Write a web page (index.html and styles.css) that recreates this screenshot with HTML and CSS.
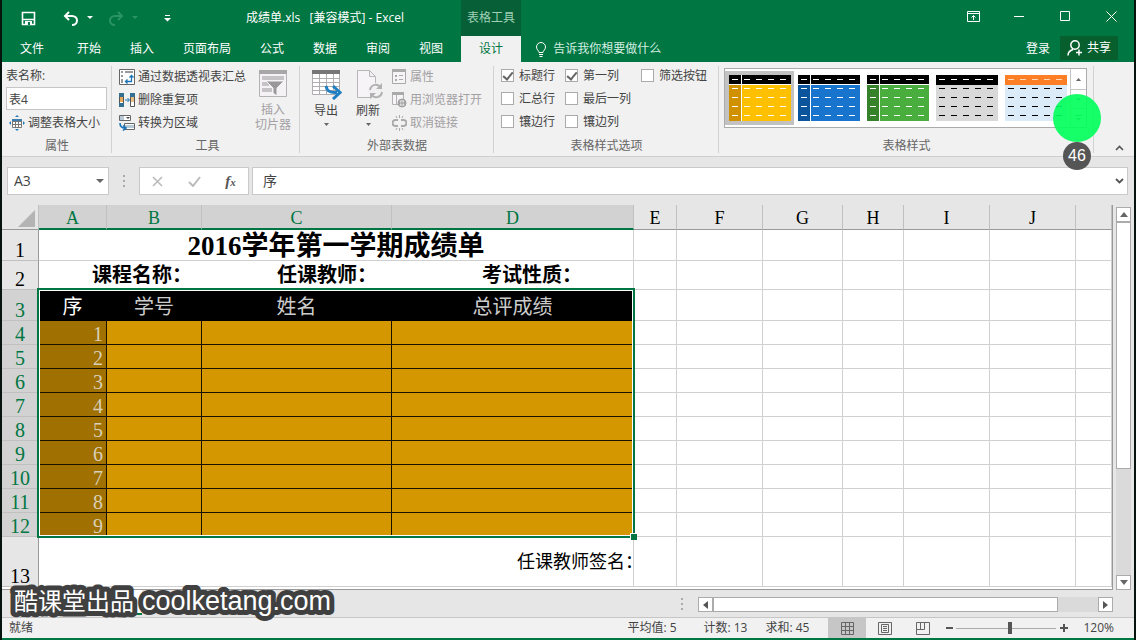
FILE: index.html
```html
<!DOCTYPE html>
<html lang="zh-CN">
  <head>
    <meta charset="utf-8">
    <title>成绩单.xls [兼容模式] - Excel</title>
    <link rel="stylesheet" href="styles.css">
  </head>
  <body>
    <svg class="defs" width="0" height="0">
      <defs>
        <path id="dashes" d="M3 4.500h6m6 0h6m6 0h6m6 0h6m6 0h6M3 13.500h6m6 0h6m6 0h6m6 0h6m6 0h6M3 22.500h6m6 0h6m6 0h6m6 0h6m6 0h6M3 31.500h6m6 0h6m6 0h6m6 0h6m6 0h6M3 40.500h6m6 0h6m6 0h6m6 0h6m6 0h6"/>
      </defs>
    </svg>

    <header class="titlebar">
      <div class="title-left">
        <div class="quick">
          <button aria-label="保存"><svg width="15" height="15" viewBox="0 0 15 15"><path d="M1.500 1.500h12v12h-12zM1 8.500h13" fill="none" stroke="#fff" stroke-width="1.600"/><path d="M4 10h7v4H4z" fill="#fff"/><path d="M7 11h2v3H7z" fill="#007642"/></svg></button>
          <button aria-label="撤消"><svg width="16" height="15" viewBox="0 0 16 15"><path d="M6 1L2 5l4 4M2 5h7c3 0 5 2 5 4.500S12 14 9 14" fill="none" stroke="#fff" stroke-width="2"/></svg></button>
          <svg class="drop" width="6" height="4" viewBox="0 0 6 4"><path d="M0 0h6L3 3z" fill="#fff"/></svg>
          <button aria-label="恢复" disabled><svg width="16" height="15" viewBox="0 0 16 15"><path d="M10 1l4 4-4 4M14 5H7C4 5 2 7 2 9.500S4 14 7 14" fill="none" stroke="#2b9466" stroke-width="2"/></svg></button>
          <svg class="drop" width="6" height="4" viewBox="0 0 6 4"><path d="M0 0h6L3 3z" fill="#2b9466"/></svg>
          <button class="quick-more" aria-label="自定义快速访问工具栏"><svg width="7" height="7" viewBox="0 0 7 7"><path d="M1 0h5v1H1zM0 3h7L3.500 6.500z" fill="#fff"/></svg></button>
        </div>
        <h1 class="doc-title">成绩单.xls&nbsp;&nbsp; [兼容模式] - Excel</h1>
      </div>
      <div class="context-title">表格工具</div>
      <div class="window-controls">
        <button aria-label="功能区显示选项"><svg width="13" height="11" viewBox="0 0 13 11"><path d="M.5.5h12v10H.5zM.5 2.500h12M6.500 9V4.500M4.500 6.500l2-2 2 2" fill="none" stroke="#fff"/></svg></button>
        <button aria-label="最小化"><svg width="10" height="11" viewBox="0 0 10 11"><path d="M0 5.500h10" stroke="#fff"/></svg></button>
        <button aria-label="最大化"><svg width="11" height="11" viewBox="0 0 11 11"><path d="M.5.5h9v9h-9z" fill="none" stroke="#fff"/></svg></button>
        <button aria-label="关闭"><svg width="11" height="11" viewBox="0 0 11 11"><path d="M.5.5l10 10M10.500.5l-10 10" stroke="#fff"/></svg></button>
      </div>
    </header>

    <nav class="tabs">
      <button class="tab tab-file">文件</button>
      <button class="tab">开始</button>
      <button class="tab">插入</button>
      <button class="tab">页面布局</button>
      <button class="tab">公式</button>
      <button class="tab">数据</button>
      <button class="tab">审阅</button>
      <button class="tab">视图</button>
      <button class="tab tab-active">设计</button>
      <button class="tell-me"><svg width="12" height="15" viewBox="0 0 12 15"><path d="M4 10.500C4 8.500 1.500 8 1.500 5a4.500 4.500 0 0 1 9 0c0 3-2.500 3.500-2.500 5.500zM4 12.500h4M4.500 14.500h3" fill="none" stroke="#fff"/></svg>告诉我你想要做什么</button>
      <div class="account">
        <button class="login">登录</button>
        <button class="share"><svg width="16" height="16" viewBox="0 0 16 16"><circle cx="8" cy="5" r="4.200" fill="none" stroke="#fff" stroke-width="1.500"/><path d="M1 15.500c0-3 2-5 5-6M9 12.500h6M12 9.500v6" fill="none" stroke="#fff" stroke-width="1.500"/></svg>共享</button>
      </div>
    </nav>

    <section class="ribbon">
      <div class="group group-props">
        <div class="rows">
          <label for="table-name">表名称:</label>
          <input id="table-name" class="table-name" value="表4">
          <button class="cmd"><svg width="16" height="16" viewBox="0 0 16 16"><path d="M3.500 4.500h9v8h-9zM3.500 6.500h9M3.500 9.500h9M6.500 4.500v8M9.500 4.500v8" fill="#fff" stroke="#777"/><path d="M3 4h10v2H3z" fill="#3c7fb0"/><path d="M6 2l2-2 2 2zM6 14l2 2 2-2zM2 6L0 8l2 2zM14 6l2 2-2 2z" fill="#2b7db8"/></svg>调整表格大小</button>
        </div>
        <h2>属性</h2>
      </div>

      <div class="group group-tools">
        <div class="cols">
          <div class="rows">
            <button class="cmd"><svg width="16" height="16" viewBox="0 0 16 16"><path d="M.5.5h15v15H.5z" fill="#fff" stroke="#666"/><path d="M2 2h2v2H2zM6 2h8v2H6zM2 6h2v2H2zM2 10h2v4H2z" fill="#9a9a9a"/><path d="M7 12.500h5.500V7M10.500 8.500l2-2 2 2M8.500 10.500l-2 2 2 2" fill="none" stroke="#1b75b8" stroke-width="1.300"/></svg>通过数据透视表汇总</button>
            <button class="cmd"><svg width="16" height="16" viewBox="0 0 16 16"><path d="M.5 1.500h4v13h-4zM11.500 1.500h4v13h-4z" fill="#fff" stroke="#555"/><path d="M0 1h5v4H0zM0 11h5v4H0zM11 1h5v4h-5z" fill="#336f93"/><path d="M1 5h3v5H1z" fill="#e6a95b"/><path d="M12 5h3v5h-3z" fill="#e8bd85"/><path d="M6 8h4M8.500 6l2 2-2 2" fill="none" stroke="#1b75b8"/></svg>删除重复项</button>
            <button class="cmd"><svg width="16" height="16" viewBox="0 0 16 16"><path d="M.5.5h11v5H.5zM5.500 8.500h10v6h-10z" fill="#fff" stroke="#666"/><path d="M1 1h4v4H1zM6 10h9v3H6z" fill="#b7c9d5"/><path d="M7 2h4L9 4z" fill="#444"/><path d="M1 8c0 4 2 5 5 5M4 10.500l3 2.500-3 2.500" fill="none" stroke="#1b75b8" stroke-width="1.600"/></svg>转换为区域</button>
          </div>
          <button class="big" disabled><svg width="30" height="30" viewBox="0 0 30 30"><path d="M1.500 1.500h27v26h-27z" fill="#f4f2f4" stroke="#b5b2b5"/><path d="M1 1h28v4H1z" fill="#a9a6a9"/><path d="M4 7h22v4H4zM4 13h7v4H4zM4 19h10v4H4z" fill="#c6c3c6"/><path d="M8 12h18l-7 7v8l-4-3v-5z" fill="#9a979a" stroke="#f4f2f4"/></svg><span>插入<br>切片器</span></button>
        </div>
        <h2>工具</h2>
      </div>

      <div class="group group-external">
        <div class="cols">
          <button class="big"><svg width="31" height="31" viewBox="0 0 31 31"><path d="M1.500 1.500h27v24h-27zM1.500 9.500h27M1.500 13.500h27M1.500 17.500h27M1.500 21.500h27M8.500 5v20M15.500 5v20M22.500 5v20" fill="#fff" stroke="#b0adb0"/><path d="M1 1h28v4H1z" fill="#767676"/><path d="M15 17c1 6 5 7 11 6.500M22 17l7 6.500-7 6.500" fill="none" stroke="#1f7fc1" stroke-width="3"/></svg><span>导出</span><svg class="caret" width="5" height="3" viewBox="0 0 5 3"><path d="M0 0h5L2.500 3z" fill="#666"/></svg></button>
          <button class="big"><svg width="31" height="31" viewBox="0 0 31 31"><path d="M4.500 1.500h12l6 6v21h-18zM16.500 1.500v6h6" fill="#f6f4f6" stroke="#b9b6b9"/><circle cx="23" cy="22" r="8" fill="#f1f1f1"/><path d="M17 21c1-6 8-7 11-2M29 23c-1 6-8 7-11 2" fill="none" stroke="#b3b0b3" stroke-width="2"/><path d="M29 14v6h-6zM17 30v-6h6z" fill="#b3b0b3"/></svg><span>刷新</span><svg class="caret" width="5" height="3" viewBox="0 0 5 3"><path d="M0 0h5L2.500 3z" fill="#666"/></svg></button>
          <div class="rows">
            <button class="cmd" disabled><svg width="15" height="16" viewBox="0 0 15 16"><path d="M.5.5h13v14H.5z" fill="#f6f4f6" stroke="#aaa"/><path d="M0 0h14v3H0zM3 6h2v2H3zM3 10h2v2H3z" fill="#aaa"/><path d="M7 6.500h4M7 10.500h4" stroke="#aaa"/></svg>属性</button>
            <button class="cmd" disabled><svg width="15" height="16" viewBox="0 0 15 16"><path d="M.5 1.500h11v11H.5zM4.500 3v9" fill="#f6f4f6" stroke="#b5b2b5"/><path d="M0 0h12v3H0z" fill="#aaa"/><circle cx="10" cy="11" r="4" fill="#f6f4f6" stroke="#999"/><path d="M6 11h8M10 7v8M8 8q-1 3 0 6M12 8q1 3 0 6" fill="none" stroke="#999"/></svg>用浏览器打开</button>
            <button class="cmd" disabled><svg width="15" height="16" viewBox="0 0 15 16"><path d="M6 5H3.500a3 3 0 0 0 0 6H6M9 5h2.500a3 3 0 0 1 0 6H9" fill="none" stroke="#aaa" stroke-width="2"/><path d="M7.500 0v3M4 1l1 2M11 1l-1 2M7.500 13v3M4 15l1-2M11 15l-1-2" stroke="#aaa"/></svg>取消链接</button>
          </div>
        </div>
        <h2>外部表数据</h2>
      </div>

      <div class="group group-options">
        <div class="checks">
          <label><input type="checkbox" checked>标题行</label>
          <label><input type="checkbox" checked>第一列</label>
          <label><input type="checkbox">筛选按钮</label>
          <label><input type="checkbox">汇总行</label>
          <label><input type="checkbox">最后一列</label>
          <span></span>
          <label><input type="checkbox">镶边行</label>
          <label><input type="checkbox">镶边列</label>
        </div>
        <h2>表格样式选项</h2>
      </div>

      <div class="group group-styles">
        <div class="gallery">
          <button class="swatch swatch-on" aria-label="金色"><svg width="62" height="46"><path d="M0 0h62v9H0z"/><path d="M0 10h62v36H0z" fill="#ffc000"/><path d="M0 10h12v36H0z" fill="#cf9100"/><path d="M12.500 0v46M0 9.500h62" stroke="#fff"/><use href="#dashes" stroke="#fff"/></svg></button>
          <button class="swatch" aria-label="蓝色"><svg width="62" height="46"><path d="M0 0h62v9H0z"/><path d="M0 10h62v36H0z" fill="#1874cd"/><path d="M0 10h12v36H0z" fill="#0a559b"/><path d="M12.500 0v46M0 9.500h62" stroke="#fff"/><use href="#dashes" stroke="#fff"/></svg></button>
          <button class="swatch" aria-label="绿色"><svg width="62" height="46"><path d="M0 0h62v9H0z"/><path d="M0 10h62v36H0z" fill="#4aae3f"/><path d="M0 10h12v36H0z" fill="#35822b"/><path d="M12.500 0v46M0 9.500h62" stroke="#fff"/><use href="#dashes" stroke="#fff"/></svg></button>
          <button class="swatch" aria-label="灰色"><svg width="62" height="46"><path d="M0 0h62v10H0z"/><path d="M0 10h62v36H0z" fill="#d9d9d9"/><use href="#dashes" stroke="#000"/><path d="M3 4.500h6m6 0h6m6 0h6m6 0h6m6 0h6" stroke="#fff"/></svg></button>
          <button class="swatch" aria-label="橙色"><svg width="62" height="46"><path d="M0 0h62v10H0z" fill="#ff7f27"/><path d="M0 10h62v36H0z" fill="#dcebf8"/><use href="#dashes" stroke="#000"/><path d="M3 4.500h6m6 0h6m6 0h6m6 0h6m6 0h6" stroke="#ff7f27"/><path d="M3 4.500h6m6 0h6m6 0h6m6 0h6m6 0h6" stroke="#ffd9b8"/></svg></button>
          <div class="gallery-scroll">
            <button aria-label="上一行"><svg width="5" height="3"><path d="M0 3h5L2.500 0z" fill="#666"/></svg></button>
            <button aria-label="下一行"><svg width="5" height="3"><path d="M0 0h5L2.500 3z" fill="#666"/></svg></button>
            <button aria-label="其他"><svg width="7" height="6"><path d="M0 0h7v1H0zM1 3h5L3.500 6z" fill="#666"/></svg></button>
          </div>
          <div class="click-spot"></div>
          <div class="click-count">46</div>
        </div>
        <h2>表格样式</h2>
      </div>
      <button class="collapse" aria-label="折叠功能区"><svg width="9" height="6" viewBox="0 0 9 6"><path d="M1 5l3.500-3.500L8 5" fill="none" stroke="#555" stroke-width="1.600"/></svg></button>
    </section>

    <section class="formula-bar">
      <div class="name-box">
        <input value="A3" aria-label="名称框">
        <svg width="8" height="4" viewBox="0 0 8 4"><path d="M0 0h8L4 4z" fill="#666"/></svg>
      </div>
      <svg class="grip" width="2" height="12" viewBox="0 0 2 12"><path d="M0 0h2v2H0zM0 5h2v2H0zM0 10h2v2H0z" fill="#aaa"/></svg>
      <div class="formula-buttons">
        <button aria-label="取消"><svg width="11" height="11" viewBox="0 0 11 11"><path d="M1 1l9 9M10 1l-9 9" stroke="#bbb" stroke-width="1.600"/></svg></button>
        <button aria-label="输入"><svg width="13" height="11" viewBox="0 0 13 11"><path d="M1 6l4 4 7-9" fill="none" stroke="#bbb" stroke-width="2"/></svg></button>
        <button class="fx" aria-label="插入函数">f<sub>x</sub></button>
      </div>
      <div class="formula-input">
        <input value="序" aria-label="编辑栏">
        <svg width="9" height="6" viewBox="0 0 9 6"><path d="M1 1l3.500 3.500L8 1" fill="none" stroke="#555" stroke-width="1.800"/></svg>
      </div>
    </section>

    <main class="sheet">
      <div class="grid">
        <table>
          <colgroup>
            <col class="w-head"><col class="w-a"><col class="w-b"><col class="w-c"><col class="w-d"><col class="w-e"><col class="w-f"><col class="w-g"><col class="w-h"><col class="w-i"><col class="w-j"><col>
          </colgroup>
          <thead>
            <tr><th class="corner"><svg width="17" height="17" viewBox="0 0 17 17"><path d="M17 0v17H0z" fill="#b4b4b4"/></svg></th><th class="on">A</th><th class="on">B</th><th class="on">C</th><th class="on">D</th><th>E</th><th>F</th><th>G</th><th>H</th><th>I</th><th>J</th><th></th></tr>
          </thead>
          <tbody>
            <tr class="r-title"><th>1</th><td colspan="4" class="sheet-title">2016学年第一学期成绩单</td><td></td><td></td><td></td><td></td><td></td><td></td><td></td></tr>
            <tr class="r-info"><th>2</th><td colspan="4"><div class="info"><span>课程名称：</span><span>任课教师：</span><span>考试性质：</span></div></td><td></td><td></td><td></td><td></td><td></td><td></td><td></td></tr>
            <tr class="r-head"><th class="on">3</th><td class="first">序</td><td>学号</td><td>姓名</td><td>总评成绩</td><td></td><td></td><td></td><td></td><td></td><td></td><td></td></tr>
            <tr class="r-data"><th class="on">4</th><td>1</td><td></td><td></td><td></td><td></td><td></td><td></td><td></td><td></td><td></td><td></td></tr>
            <tr class="r-data"><th class="on">5</th><td>2</td><td></td><td></td><td></td><td></td><td></td><td></td><td></td><td></td><td></td><td></td></tr>
            <tr class="r-data"><th class="on">6</th><td>3</td><td></td><td></td><td></td><td></td><td></td><td></td><td></td><td></td><td></td><td></td></tr>
            <tr class="r-data"><th class="on">7</th><td>4</td><td></td><td></td><td></td><td></td><td></td><td></td><td></td><td></td><td></td><td></td></tr>
            <tr class="r-data"><th class="on">8</th><td>5</td><td></td><td></td><td></td><td></td><td></td><td></td><td></td><td></td><td></td><td></td></tr>
            <tr class="r-data"><th class="on">9</th><td>6</td><td></td><td></td><td></td><td></td><td></td><td></td><td></td><td></td><td></td><td></td></tr>
            <tr class="r-data"><th class="on">10</th><td>7</td><td></td><td></td><td></td><td></td><td></td><td></td><td></td><td></td><td></td><td></td></tr>
            <tr class="r-data"><th class="on">11</th><td>8</td><td></td><td></td><td></td><td></td><td></td><td></td><td></td><td></td><td></td><td></td></tr>
            <tr class="r-data"><th class="on">12</th><td>9</td><td></td><td></td><td></td><td></td><td></td><td></td><td></td><td></td><td></td><td></td></tr>
            <tr class="r-sign"><th>13</th><td colspan="4">任课教师签名：</td><td></td><td></td><td></td><td></td><td></td><td></td><td></td></tr>
          </tbody>
        </table>
        <div class="selection"></div>
      </div>
      <div class="vscroll">
        <button aria-label="向上滚动"><svg width="8" height="5"><path d="M0 5h8L4 0z" fill="#666"/></svg></button>
        <div class="vthumb"></div>
        <div class="vtrack"></div>
        <button aria-label="向下滚动"><svg width="8" height="5"><path d="M0 0h8L4 5z" fill="#666"/></svg></button>
      </div>
    </main>

    <footer>
      <div class="sheet-bar">
        <button class="sheet-tab sheet-tab-active">1#</button>
        <button class="sheet-tab">2#</button>
        <button class="add-sheet" aria-label="新工作表"><svg width="14" height="14" viewBox="0 0 14 14"><path d="M4 7h6M7 4v6" stroke="#666" stroke-width="1.500"/><circle cx="7" cy="7" r="6" fill="none" stroke="#666"/></svg></button>
        <svg class="grip" width="2" height="12" viewBox="0 0 2 12"><path d="M0 0h2v2H0zM0 5h2v2H0zM0 10h2v2H0z" fill="#aaa"/></svg>
        <div class="hscroll">
          <button aria-label="向左滚动"><svg width="5" height="8"><path d="M5 0v8L0 4z" fill="#555"/></svg></button>
          <div class="hthumb"></div>
          <div class="htrack"></div>
          <button aria-label="向右滚动"><svg width="5" height="8"><path d="M0 0v8L5 4z" fill="#555"/></svg></button>
        </div>
      </div>
      <div class="status">
        <span>就绪</span>
        <div class="stats"><span>平均值: 5</span><span>计数: 13</span><span>求和: 45</span></div>
        <div class="views">
          <button class="view-on" aria-label="普通"><svg width="13" height="13" viewBox="0 0 13 13"><path d="M.5.5h12v12H.5zM.5 4.500h12M.5 8.500h12M4.500.5v12M8.500.5v12" fill="none" stroke="#666"/></svg></button>
          <button aria-label="页面布局"><svg width="14" height="13" viewBox="0 0 14 13"><path d="M.5.5h13v12H.5zM3.500 2.500h7v8h-7zM5 4.500h4M5 6.500h4M5 8.500h4" fill="none" stroke="#666"/></svg></button>
          <button aria-label="分页预览"><svg width="14" height="13" viewBox="0 0 14 13"><path d="M.5.5h13v12H.5zM.5 7.500h8V.5M4.500.5v7" fill="none" stroke="#666"/></svg></button>
        </div>
        <div class="zoom">
          <button aria-label="缩小"><svg width="7" height="8"><path d="M0 3h7v2H0z" fill="#555"/></svg></button>
          <input type="range" min="0" max="100" value="54" aria-label="缩放">
          <button aria-label="放大"><svg width="8" height="8"><path d="M0 3h8v2H0zM3 0h2v8H3z" fill="#555"/></svg></button>
          <span>120%</span>
        </div>
      </div>
    </footer>

    <svg class="watermark" width="340" height="44">
      <text x="8" y="30">酷课堂出品</text>
      <text class="latin" x="136" y="30">coolketang.com</text>
    </svg>
  </body>
</html>
```

FILE: styles.css
```css
* {
  box-sizing: border-box;
}

body {
  background: #e6e6e6;
  border: solid #06140d;
  border-width: 0 2px;
  color: #444;
  display: flex;
  flex-direction: column;
  font: 12px/18px "Open Sans", "Noto Sans CJK SC", sans-serif;
  height: 100vh;
  margin: 0;
  overflow: hidden;
  position: relative;
}

button,
input {
  background: none;
  border: 0;
  color: inherit;
  font: inherit;
  margin: 0;
  padding: 0;
}

svg {
  display: block;
  flex: none;
}

.defs {
  position: absolute;
}

/* title bar */

.titlebar {
  background: #007642;
  color: #fff;
  display: flex;
  height: 36px;
}

.title-left {
  display: flex;
  justify-content: space-between;
  padding: 0 57px 0 19px;
  width: 459px;
}

.quick {
  align-items: center;
  display: flex;
}

.quick button + button {
  margin-left: 27px;
}

.quick .drop {
  margin: 0 15px 0 8px;
}

.quick .quick-more {
  margin-left: 11px;
}

.doc-title {
  font-size: 12px;
  font-weight: normal;
  line-height: 36px;
  margin: 0;
  white-space: nowrap;
}

.context-title {
  background: #065f36;
  color: #9fd0b5;
  line-height: 36px;
  text-align: center;
  width: 60px;
}

.window-controls {
  display: flex;
  margin-left: auto;
}

.window-controls button {
  align-items: center;
  display: flex;
  height: 33px;
  justify-content: center;
  width: 46px;
}

/* tabs */

.tabs {
  background: #007642;
  color: #fff;
  display: flex;
  gap: 1px;
  height: 26px;
}

.tab {
  padding: 0 14px;
  white-space: nowrap;
}

.tab-file {
  padding: 0 18px;
}

.tab-active {
  background: #f1f1f1;
  color: #007642;
  margin-left: 3px;
  padding: 0;
  width: 60px;
}

.tell-me {
  align-items: center;
  color: #d5eee1;
  display: flex;
  gap: 6px;
  padding-left: 13px;
}

.account {
  display: flex;
  gap: 10px;
  margin-left: auto;
  padding-right: 16px;
}

.share {
  align-items: center;
  background: #065f2c;
  display: flex;
  gap: 4px;
  justify-content: center;
  margin-bottom: 2px;
  width: 58px;
}

/* ribbon */

.ribbon {
  background: #f1f1f1;
  border-bottom: 1px solid #cfcfcf;
  display: flex;
  height: 95px;
}

.group {
  display: flex;
  flex: none;
  flex-direction: column;
  justify-content: space-between;
  padding: 2px 4px 0;
  position: relative;
}

.group::after {
  background: #d2d2d2;
  content: "";
  height: 87px;
  position: absolute;
  right: 0;
  top: 4px;
  width: 1px;
}

.group h2 {
  color: #666;
  font-size: 12px;
  font-weight: normal;
  line-height: 20px;
  margin: 0;
  text-align: center;
}

.group-props {
  width: 110px;
}

.group-tools {
  padding-left: 7px;
  width: 188px;
}

.group-external {
  width: 194px;
}

.group-options {
  width: 225px;
}

.group-styles {
  width: 375px;
}

.rows {
  align-items: center;
  display: grid;
  grid-template-rows: repeat(3, 23px);
}

.cols {
  display: flex;
  gap: 8px;
}

.cmd {
  align-items: center;
  display: flex;
  gap: 3px;
  padding-top: 2px;
  white-space: nowrap;
}

button:disabled {
  color: #a3a0a3;
}

.table-name {
  background: #fff;
  border: 1px solid #c6c6c6;
  height: 23px;
  padding: 0 2px;
  width: 101px;
}

.group-props .cmd {
  padding-left: 3px;
}

.big {
  align-items: center;
  display: flex;
  flex-direction: column;
  line-height: 15px;
  padding-top: 5px;
  width: 38px;
}

.big span {
  margin-top: 3px;
  white-space: nowrap;
}

.caret {
  margin-top: 5px;
}

.group-external .cols {
  gap: 4px;
  padding-left: 3px;
}

.group-external .rows {
  padding-left: 1px;
}

.checks {
  display: grid;
  grid-template-columns: 64px 76px 70px;
  grid-template-rows: repeat(3, 23px);
  padding-left: 3px;
}

.checks label {
  align-items: center;
  display: flex;
  gap: 5px;
  white-space: nowrap;
}

.checks input {
  appearance: none;
  background: #fff;
  border: 1px solid #ababab;
  height: 13px;
  width: 13px;
}

.checks input:checked {
  display: grid;
  place-items: center;
}

.checks input:checked::before {
  border: solid #666;
  border-width: 0 2px 2px 0;
  content: "";
  height: 8px;
  margin-bottom: 2px;
  transform: rotate(40deg);
  width: 4px;
}

.gallery {
  background: #fff;
  border: 1px solid #ababab;
  display: flex;
  height: 60px;
  margin: 4px 0 0 1px;
  position: relative;
  width: 363px;
}

.swatch {
  height: 54px;
  margin-top: 2px;
  padding: 4px;
  width: 69px;
}

.swatch-on {
  background: #c2c2c2;
}

.gallery-scroll {
  background: #fff;
  display: grid;
  flex: 1;
  grid-template-rows: 20px 19px 19px;
}

.gallery-scroll button {
  border-left: 1px solid #c6c6c6;
  display: grid;
  place-items: center;
}

.gallery-scroll button + button {
  border-top: 1px solid #c6c6c6;
}

.click-spot {
  background: #00ff5ae8;
  border-radius: 50%;
  height: 48px;
  position: absolute;
  right: -15px;
  top: 25px;
  width: 48px;
  z-index: 1;
}

.click-count {
  background: #555;
  border-radius: 50%;
  color: #fff;
  font: 16px/28px "Liberation Sans", sans-serif;
  height: 28px;
  position: absolute;
  right: -5px;
  text-align: center;
  top: 73px;
  width: 28px;
  z-index: 1;
}

.collapse {
  align-self: flex-end;
  margin: 0 10px 5px auto;
  padding: 0 0 0 5px;
}

/* formula bar */

.formula-bar {
  align-items: center;
  display: flex;
  height: 48px;
  padding: 0 6px 0 5px;
}

.name-box,
.formula-buttons,
.formula-input {
  align-items: center;
  background: #fff;
  border: 1px solid #c9c9c9;
  display: flex;
  height: 28px;
}

.name-box {
  padding: 0 4px 0 6px;
  width: 102px;
}

.name-box input,
.formula-input input {
  flex: 1;
  font-size: 14px;
  min-width: 0;
}

.formula-bar .grip {
  margin: 0 14px;
}

.formula-buttons {
  justify-content: space-around;
  margin-right: 3px;
  width: 110px;
}

.fx {
  color: #555;
  font: italic bold 15px/18px "Liberation Serif", serif;
}

.fx sub {
  font-size: 11px;
  line-height: 0;
  vertical-align: baseline;
}

.formula-input {
  flex: 1;
  padding: 0 3px 0 10px;
}

/* grid */

.sheet {
  display: flex;
  flex: 1;
  min-height: 0;
}

.grid {
  background: #fff;
  border: solid #999;
  border-width: 0 1px 1px 0;
  flex: 1;
  overflow: hidden;
  position: relative;
}

.grid table {
  border-collapse: separate;
  border-spacing: 0;
  color: #000;
  font: 20px/20px "Liberation Serif", "Noto Sans CJK SC", serif;
  table-layout: fixed;
  width: 100%;
}

.w-head { width: 37px; }
.w-a { width: 68px; }
.w-b { width: 95px; }
.w-c { width: 190px; }
.w-d { width: 242px; }
.w-e { width: 43px; }
.w-f { width: 86px; }
.w-g { width: 80px; }
.w-h { width: 61px; }
.w-i { width: 86px; }
.w-j { width: 86px; }

th,
td {
  border: solid #d0d0d0;
  border-width: 0 1px 1px 0;
  height: 24px;
  overflow: hidden;
  padding: 0;
  white-space: nowrap;
}

th {
  background: #e6e6e6;
  border-color: #c0c0c0;
  font-weight: normal;
}

th.on {
  background: #d2d2d2;
  color: #007642;
}

thead th {
  border-bottom-color: #999;
  font-size: 18px;
  height: 25px;
  padding-top: 2px;
}

thead th.on {
  border-bottom: 2px solid #007642;
}

.corner svg {
  margin-left: 16px;
}

tbody th {
  border-right-color: #999;
  vertical-align: bottom;
}

.r-title th,
.r-head th {
  height: 31px;
}

.sheet-title {
  font-size: 27px;
  font-weight: bold;
  line-height: 27px;
  padding-top: 3px;
  text-align: center;
}

.r-info th {
  height: 29px;
}

.info {
  display: grid;
  font-weight: bold;
  grid-template-columns: 185px 205px 1fr;
  line-height: 28px;
  padding-left: 53px;
}

.r-head td:nth-child(-n+5) {
  background: #000;
  border-color: #000;
  color: #ccc;
  padding-top: 3px;
  text-align: center;
}

.r-head td.first {
  color: #fff;
}

.r-data td:nth-child(-n+5) {
  background: #d59700;
  border-color: #1a1200;
}

.r-data td:nth-child(2) {
  background: #a07000;
  color: #d8d0b8;
  padding: 3px 3px 0 0;
  text-align: right;
}

.r-sign th {
  height: 50px;
}

.r-sign td:nth-child(2) {
  font-size: 18px;
  overflow: visible;
  padding-left: 478px;
}

.selection {
  border: 2px solid #007642;
  box-shadow: inset 0 0 0 1px #fff;
  height: 250px;
  left: 35px;
  position: absolute;
  top: 83px;
  width: 598px;
}

.selection::after {
  background: #007642;
  border: solid #fff;
  border-width: 1px 0 0 1px;
  bottom: -4px;
  content: "";
  height: 6px;
  position: absolute;
  right: -4px;
  width: 6px;
}

.vscroll {
  display: flex;
  flex-direction: column;
  margin: 2px 3px 0;
  width: 15px;
}

.vscroll button,
.hscroll button {
  background: #fff;
  border: 1px solid #ababab;
  display: grid;
  flex: none;
  height: 15px;
  place-items: center;
  width: 15px;
}

.vthumb,
.hthumb {
  background: #fff;
  border: 1px solid #ababab;
}

.vthumb {
  flex: 247;
}

.vtrack {
  flex: 107;
}

.vtrack,
.htrack {
  background: #dadada;
}

/* sheet tabs and status bar */

footer {
  border-bottom: 2px solid #007642;
}

.sheet-bar {
  border-bottom: 1px solid #c6c6c6;
  display: flex;
  height: 28px;
  padding: 0 21px 0 100px;
}

.sheet-tab {
  height: 25px;
  width: 40px;
}

.sheet-tab-active {
  background: #fff;
  border-bottom: 2px solid #007642;
  color: #007642;
}

.add-sheet {
  margin-left: 36px;
}

.sheet-bar .grip {
  align-self: center;
  margin-left: auto;
}

.hscroll {
  display: flex;
  margin: 7px 0 0 15px;
  width: 415px;
}

.hthumb {
  flex: 345;
  height: 15px;
}

.htrack {
  flex: 40;
  height: 15px;
}

.status {
  align-items: center;
  background: #f1f1f1;
  display: flex;
  height: 20px;
  padding: 0 20px 0 7px;
}

.stats {
  display: grid;
  grid-template-columns: 76px 62px auto;
  margin-left: auto;
}

.views {
  display: flex;
  height: 20px;
  margin-left: 19px;
}

.views button {
  display: grid;
  place-items: center;
  width: 38px;
}

.views .view-on {
  background: #c6c6c6;
}

.zoom {
  align-items: center;
  display: flex;
  margin-left: 4px;
}

.zoom input {
  appearance: none;
  background: linear-gradient(#aaa, #aaa) center / 100% 1px no-repeat;
  height: 12px;
  margin: 0 4px 0 3px;
  width: 100px;
}

.zoom input::-webkit-slider-thumb {
  appearance: none;
  background: #555;
  height: 12px;
  width: 4px;
}

.zoom span {
  margin-left: 15px;
}

/* caption over the recording */

.watermark {
  bottom: 16px;
  left: 4px;
  position: absolute;
}

.watermark text {
  fill: #fff;
  font: 24px "Noto Sans CJK SC", sans-serif;
  paint-order: stroke;
  stroke: #404040;
  stroke-linejoin: round;
  stroke-width: 10px;
}

.watermark .latin {
  font: 27px "Liberation Sans", sans-serif;
}
```
